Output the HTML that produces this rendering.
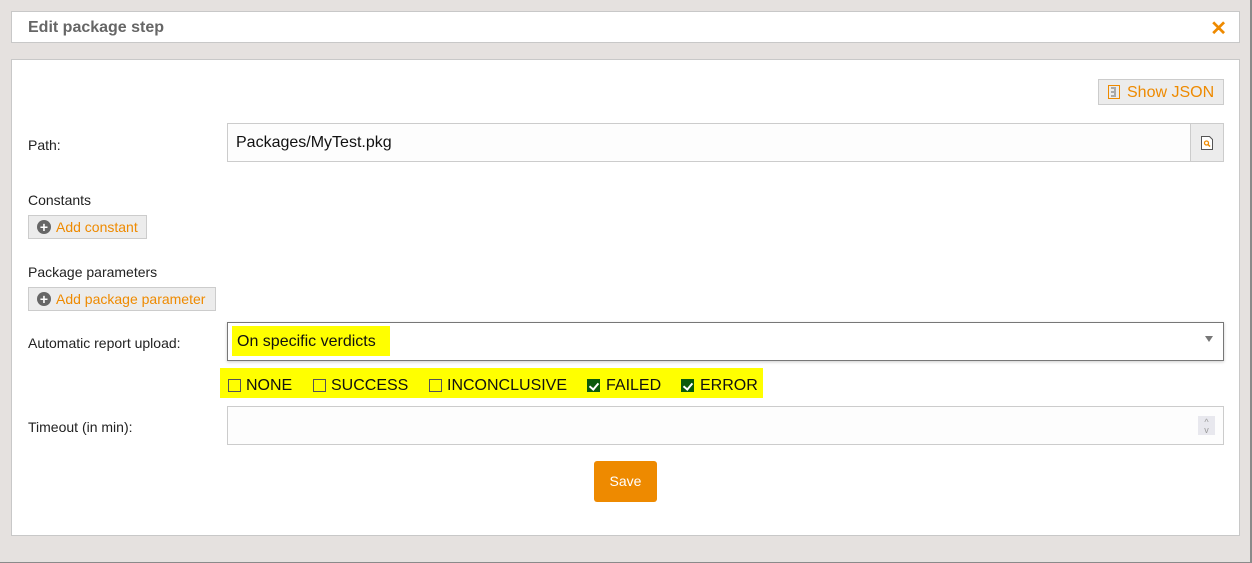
<!DOCTYPE html>
<html><head><style>
*{box-sizing:border-box;margin:0;padding:0}
body{width:1252px;height:563px;background:#e5e1df;font-family:"Liberation Sans",sans-serif;position:relative;overflow:hidden;border-right:2px solid #8a8a8a;border-bottom:1px solid #8a8a8a}
.a{position:absolute}
.hdr{left:11px;top:11px;width:1229px;height:32px;background:#fff;border:1px solid #c8c8c8}
.hdr b{position:absolute;left:16px;top:7px;font-size:16px;color:#666}
.x{right:12px;top:4px;color:#ee8a00;font-size:20px;font-weight:bold}
.box{left:11px;top:59px;width:1229px;height:477px;background:#fff;border:1px solid #c8c8c8}
.lbl{font-size:14px;color:#222}
.btn{background:#ececec;border:1px solid #ccc;color:#ee8a00;font-size:14px}
.inp{background:#fdfdfd;border:1px solid #ccc}
.cbr{position:absolute;top:3px;font-size:16px;line-height:30px;color:#111}
.cb{position:absolute;left:0;top:8px;width:13px;height:13px;border:1px solid #555;background:#ff0}
.cbk{background:#0b5a0b;border-color:#0b5a0b}
.cbk::after{content:"";position:absolute;left:3px;top:1px;width:4px;height:7px;border:solid #fff;border-width:0 2px 2px 0;transform:rotate(40deg)}
</style></head><body>
<div class="a hdr"><b>Edit package step</b><span class="a x">✕</span></div>
<div class="a box"></div>
<div class="a btn" style="left:1098px;top:79px;width:126px;height:26px;font-size:16px;padding:4px 0 0 28px">Show JSON
<svg class="a" style="left:9px;top:5px" width="12" height="14"><rect x="0.5" y="0.5" width="11" height="13" fill="none" stroke="#ee8a00"/><path d="M3 3h5M6 5h2M3 7h5M6 9h2M3 11h5" stroke="#666"/></svg></div>
<div class="a lbl" style="left:28px;top:137px">Path:</div>
<div class="a inp" style="left:227px;top:123px;width:964px;height:39px;font-size:16px;padding:10px 8px;color:#111">Packages/MyTest.pkg</div>
<div class="a btn" style="left:1190px;top:123px;width:34px;height:39px"><svg class="a" style="left:10px;top:12px" width="12" height="14"><path d="M.5.5h8l3 3v10H.5z" fill="#fff" stroke="#555"/><circle cx="5.5" cy="7" r="2" fill="none" stroke="#ee8a00" stroke-width="1.3"/><path d="M7 8.5l2 2" stroke="#ee8a00" stroke-width="1.5"/></svg></div>
<div class="a lbl" style="left:28px;top:192px">Constants</div>
<div class="a btn" style="left:28px;top:215px;width:119px;height:24px;padding:3px 0 0 27px">Add constant<span class="a" style="left:8px;top:4px;width:14px;height:14px;border-radius:50%;background:#666;color:#fff;font-size:14px;line-height:14px;text-align:center;font-weight:bold">+</span></div>
<div class="a lbl" style="left:28px;top:264px">Package parameters</div>
<div class="a btn" style="left:28px;top:287px;width:188px;height:24px;padding:3px 0 0 27px">Add package parameter<span class="a" style="left:8px;top:4px;width:14px;height:14px;border-radius:50%;background:#666;color:#fff;font-size:14px;line-height:14px;text-align:center;font-weight:bold">+</span></div>
<div class="a lbl" style="left:28px;top:335px">Automatic report upload:</div>
<div class="a" style="left:227px;top:322px;width:997px;height:39px;border:1px solid #777;background:#fff;box-shadow:0 1px 3px rgba(0,0,0,.2)">
<div class="a" style="left:4px;top:3px;width:158px;height:30px;background:#ff0;font-size:16px;padding:7px 0 0 5px;color:#111">On specific verdicts</div>
<span class="a" style="right:10px;top:13px;border-left:4px solid transparent;border-right:4px solid transparent;border-top:6px solid #777"></span></div>
<div class="a" style="left:220px;top:368px;width:543px;height:30px;background:#ff0;overflow:hidden">
<div class="cbr" style="left:8px;padding-left:18px"><span class="cb"></span>NONE</div>
<div class="cbr" style="left:93px;padding-left:18px"><span class="cb"></span>SUCCESS</div>
<div class="cbr" style="left:209px;padding-left:18px"><span class="cb"></span>INCONCLUSIVE</div>
<div class="cbr" style="left:367px;padding-left:19px"><span class="cb cbk"></span>FAILED</div>
<div class="cbr" style="left:461px;padding-left:19px"><span class="cb cbk"></span>ERROR</div>
</div>
<div class="a lbl" style="left:28px;top:419px">Timeout (in min):</div>
<div class="a inp" style="left:227px;top:406px;width:997px;height:39px"><div class="a" style="right:8px;top:9px;width:17px;height:19px;background:#e8e8ee;color:#999;font-size:9px;line-height:8px;text-align:center;padding-top:2px">^<br>v</div></div>
<div class="a" style="left:594px;top:461px;width:63px;height:41px;background:#ee8a00;border-radius:3px;color:#fff;font-size:14px;text-align:center;line-height:40px">Save</div>
</body></html>
